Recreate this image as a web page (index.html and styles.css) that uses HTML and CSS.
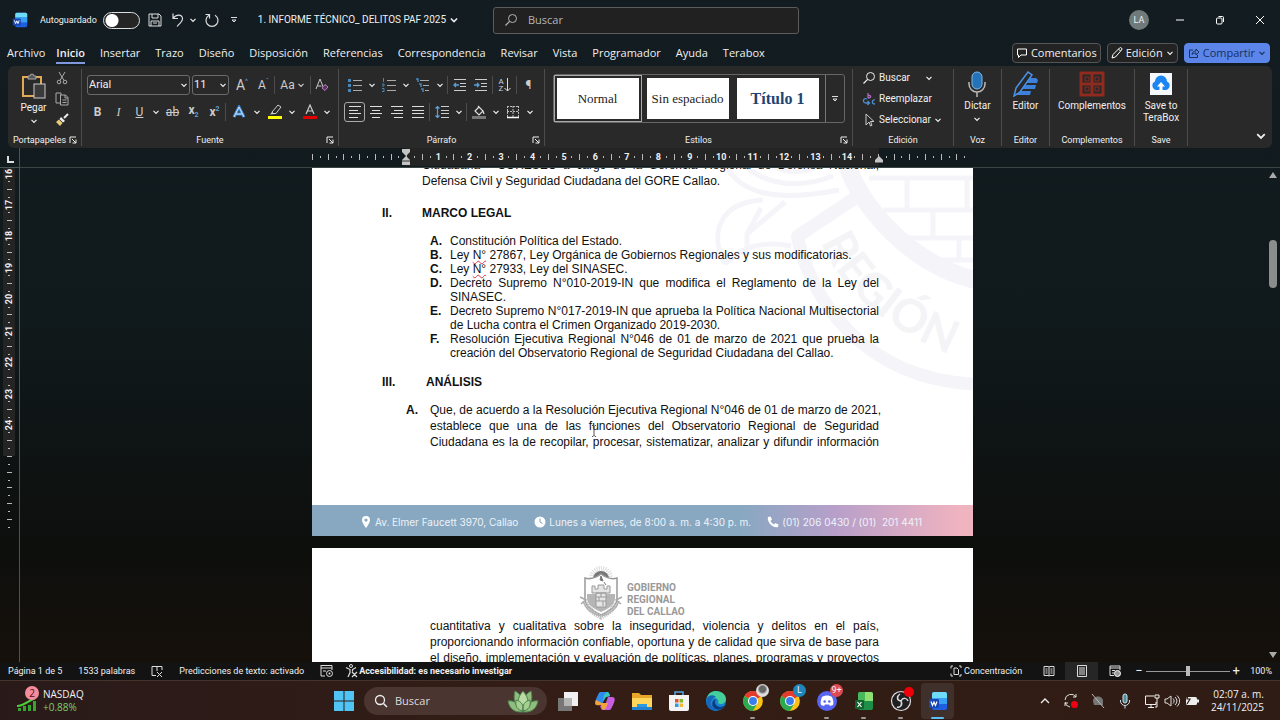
FILE: index.html
```html
<!DOCTYPE html>
<html lang="es">
<head>
    <meta charset="UTF-8">
    <meta name="viewport" content="width=device-width, initial-scale=1.0">
    <title>1. INFORME TÉCNICO_ DELITOS PAF 2025</title>
    <link rel="stylesheet" href="styles.css">
</head>
<body>

    <!-- shared icons -->
    <svg class="sprite" aria-hidden="true">
        <symbol id="chev" viewBox="0 0 8 8"><path d="M1.5 2.8 4 5.3 6.5 2.8" fill="none" stroke="currentColor" stroke-width="1.2"/></symbol>
        <symbol id="launch" viewBox="0 0 8 8"><path d="M1 7V1h6M3 3l4 4M7 3.500V7H3.500" fill="none" stroke="currentColor"/></symbol>
        <symbol id="lens" viewBox="0 0 14 14"><circle cx="8.500" cy="5.500" r="4" fill="none" stroke="currentColor"/><path d="M5.600 8.400 1.500 12.500" stroke="currentColor" stroke-width="1.200"/></symbol>
        <symbol id="word" viewBox="0 0 20 20"><rect x="4" y="1" width="15" height="18" rx="2" fill="#1f5fe0"/><path d="M6 1h11a2 2 0 0 1 2 2v4H4V3a2 2 0 0 1 2-2z" fill="#6fdcf7"/><path d="M4 7h15v6H4z" fill="#37a0f2"/><rect x="1" y="8" width="10" height="9" rx="1" fill="#1746b5"/><path d="m3 10.500 1.500 4L6 11l1.500 3.500 1.500-4" fill="none" stroke="#fff" stroke-width="1.200"/></symbol>
        <symbol id="chrome" viewBox="0 0 20 20"><circle cx="10" cy="10" r="9" fill="#fbc116"/><path d="M10 10 2.200 5.500A9 9 0 0 1 17.800 5.500z" fill="#e33b2e"/><path d="M10 10 2.200 5.500A9 9 0 0 0 10 19l3.500-6z" fill="#2da94f"/><circle cx="10" cy="10" r="4.600" fill="#fff"/><circle cx="10" cy="10" r="3.600" fill="#3b7ded"/></symbol>
    </svg>

    <header class="titlebar">
        <div class="quick">
            <svg class="i16" viewBox="0 0 20 20"><use href="#word"/></svg>
            <label class="autosave"><span>Autoguardado</span><input type="checkbox" class="switch"></label>
            <button aria-label="Guardar"><svg class="i16" viewBox="0 0 16 16"><path d="M2 2h10l2 2v10H2zM5 2v4h6V2M4 14V9h8v5M6 11h4" fill="none" stroke="#ddd"/></svg></button>
            <button class="undo" aria-label="Deshacer"><svg class="i16" viewBox="0 0 16 16"><path d="M3 1.500V6.500H8M3 6.500C6 2 12 2 12.500 6.500 12.500 10 9 12 7 14.500" fill="none" stroke="#ddd" stroke-width="1.200"/></svg><svg class="i8"><use href="#chev"/></svg></button>
            <button aria-label="Repetir"><svg class="i16" viewBox="0 0 16 16"><path d="M5 3.200a6 6 0 1 0 6 0M1.500 2.500h4v4" fill="none" stroke="#ddd" stroke-width="1.200"/></svg></button>
            <button class="more" aria-label="Personalizar"><svg class="i8" viewBox="0 0 8 8"><path d="M1 1.500h6M2 4l2 2 2-2z" fill="none" stroke="#ddd"/></svg></button>
            <button class="docname">1. INFORME TÉCNICO_ DELITOS PAF 2025 <svg class="i10"><use href="#chev"/></svg></button>
        </div>
        <label class="search">
            <svg class="i14"><use href="#lens"/></svg>
            <input type="text" placeholder="Buscar" aria-label="Buscar">
        </label>
        <div class="window-buttons">
            <span class="avatar">LA</span>
            <button aria-label="Minimizar"><svg class="i10" viewBox="0 0 10 10"><path d="M1 5h8" stroke="#fff"/></svg></button>
            <button aria-label="Restaurar"><svg class="i10" viewBox="0 0 10 10"><rect x="1.500" y="3" width="5.500" height="6" rx="1" fill="none" stroke="#fff"/><path d="M3.500 1.500h4A1 1 0 0 1 8.500 2.500V7" fill="none" stroke="#fff"/></svg></button>
            <button aria-label="Cerrar"><svg class="i10" viewBox="0 0 10 10"><path d="m1 1 8 8M9 1 1 9" stroke="#fff"/></svg></button>
        </div>
    </header>

    <nav class="menu">
        <a href="#">Archivo</a>
        <a href="#" class="active">Inicio</a>
        <a href="#">Insertar</a>
        <a href="#">Trazo</a>
        <a href="#">Diseño</a>
        <a href="#">Disposición</a>
        <a href="#">Referencias</a>
        <a href="#">Correspondencia</a>
        <a href="#">Revisar</a>
        <a href="#">Vista</a>
        <a href="#">Programador</a>
        <a href="#">Ayuda</a>
        <a href="#">Terabox</a>
        <div class="menu-right">
            <button class="pill"><svg class="i12" viewBox="0 0 12 12"><path d="M1.500 2h9v6H5L2.500 10.500V8h-1z" fill="none" stroke="#fff"/></svg>Comentarios</button>
            <button class="pill"><svg class="i12" viewBox="0 0 12 12"><path d="M1 11 2 7.500 8.500 1a1.400 1.400 0 0 1 2 2L4.500 10zM7.500 2l2 2" fill="none" stroke="#fff"/></svg>Edición<svg class="i8"><use href="#chev"/></svg></button>
            <button class="pill share"><svg class="i12" viewBox="0 0 12 12"><path d="M5 3H1.500v7.500h8V8M4 7.500C4 5 6 4 8 4V2l3 3-3 3V6C6 6 5 6.500 4 7.500z" fill="none" stroke="#16305f"/></svg>Compartir<svg class="i8"><use href="#chev"/></svg></button>
        </div>
    </nav>

    <section class="ribbon">
        <div class="group clipboard">
            <div class="tools">
                <button class="big"><svg class="i26" viewBox="0 0 26 26"><rect x="2" y="4" width="18" height="19" fill="none" stroke="#e0a955" stroke-width="2"/><path d="M7 6V3h2a2 2 0 0 1 4 0h2v3z" fill="#555" stroke="#aaa"/><rect x="13" y="11" width="11" height="14" fill="#3a3a3a" stroke="#ccc"/></svg>Pegar<svg class="i8"><use href="#chev"/></svg></button>
                <div class="stack">
                    <button aria-label="Cortar"><svg class="i14" viewBox="0 0 14 14"><path d="m4 1 5 8.500M10 1 5 9.500" stroke="#aaa"/><circle cx="4" cy="11" r="1.800" fill="none" stroke="#aaa"/><circle cx="10" cy="11" r="1.800" fill="none" stroke="#aaa"/></svg></button>
                    <button aria-label="Copiar"><svg class="i14" viewBox="0 0 14 14"><path d="M5 11H1V1h5v2M5.500 3h5L13 5.500V13H5.500zM10 3v3h3M7.500 8h4M7.500 10.500h4" fill="none" stroke="#aaa"/></svg></button>
                    <button aria-label="Copiar formato"><svg class="i14" viewBox="0 0 14 14"><path d="m13 1-4 4" stroke="#eee" stroke-width="2"/><path d="m6 4 4 4-2 1.500L4.500 6z" fill="#eee"/><path d="M4 6.500 7.500 10 5 13 1 9z" fill="#e8cb78"/></svg></button>
                </div>
            </div>
            <footer>Portapapeles<svg class="i8"><use href="#launch"/></svg></footer>
        </div>

        <div class="group font">
            <div class="tools rows">
                <div class="row">
                    <label class="drop face"><select aria-label="Fuente"><option>Arial</option></select><svg class="i8"><use href="#chev"/></svg></label>
                    <label class="drop size"><select aria-label="Tamaño"><option>11</option></select><svg class="i8"><use href="#chev"/></svg></label>
                    <button class="letter grow">A<sup>^</sup></button>
                    <button class="letter">A<sup>ˇ</sup></button>
                    <i class="sep"></i>
                    <button class="letter case">Aa<svg class="i8"><use href="#chev"/></svg></button>
                    <i class="sep"></i>
                    <button aria-label="Borrar formato"><svg class="i14" viewBox="0 0 14 14"><path d="M1 11 5 1l4 10M2.500 8h4" fill="none" stroke="#ccc"/><path d="m7 10 3-3.500 3 2.500-3 3.500z" fill="#59315f" stroke="#b77cc4"/></svg></button>
                </div>
                <div class="row">
                    <button class="letter"><b>B</b></button>
                    <button class="letter serif"><em>I</em></button>
                    <button class="letter"><u>U</u></button>
                    <button class="arrow" aria-label="Subrayado"><svg class="i8"><use href="#chev"/></svg></button>
                    <button class="letter"><s>ab</s></button>
                    <button class="letter bold">x<sub>2</sub></button>
                    <button class="letter bold">x<sup>2</sup></button>
                    <i class="sep"></i>
                    <button class="glow" aria-label="Efectos"><svg class="i14" viewBox="0 0 14 14"><path d="M2 12 7 2l5 10M4 9h6" fill="none" stroke="#3d86cf" stroke-width="3"/><path d="M2 12 7 2l5 10M4 9h6" fill="none" stroke="#d4e8fb"/></svg></button>
                    <button class="arrow" aria-label="Más efectos"><svg class="i8"><use href="#chev"/></svg></button>
                    <button class="colour" aria-label="Resaltado"><svg class="i16" viewBox="0 0 16 16"><path d="m5 8 6-7 3 2-5 6.500H6z" fill="none" stroke="#ccc"/><path d="M3 10.500 5 8l2.500 2z" fill="#ccc"/><path d="M1 12h14v3H1z" fill="#ffff00"/></svg></button>
                    <button class="arrow" aria-label="Color de resaltado"><svg class="i8"><use href="#chev"/></svg></button>
                    <button class="colour" aria-label="Color"><svg class="i16" viewBox="0 0 16 16"><path d="M4 10 8 1l4 9M5.500 7h5" fill="none" stroke="#ccc" stroke-width="1.200"/><path d="M1 12h14v3H1z" fill="#e00000"/></svg></button>
                    <button class="arrow" aria-label="Más colores"><svg class="i8"><use href="#chev"/></svg></button>
                </div>
            </div>
            <footer>Fuente<svg class="i8"><use href="#launch"/></svg></footer>
        </div>

        <div class="group paragraph">
            <div class="tools rows">
                <div class="row">
                    <button aria-label="Viñetas"><svg class="i14" viewBox="0 0 14 14"><path d="M5 2.500h9M5 7.500h9M5 12.500h9" stroke="#aaa"/><path d="M0 2.500h3M0 7.500h3M0 12.500h3" stroke="#4787ba" stroke-width="3"/></svg></button>
                    <button class="arrow" aria-label="Más viñetas"><svg class="i8"><use href="#chev"/></svg></button>
                    <button aria-label="Numeración"><svg class="i14" viewBox="0 0 14 14"><path d="M5 2.500h9M5 7.500h9M5 12.500h9" stroke="#aaa"/><path d="M1.500 0v4M0 6h2v2H0M0 10.500h2v3H0" fill="none" stroke="#4787ba"/></svg></button>
                    <button class="arrow" aria-label="Más numeración"><svg class="i8"><use href="#chev"/></svg></button>
                    <button aria-label="Multinivel"><svg class="i14" viewBox="0 0 14 14"><path d="M4 2.500h9M7 7.500h6M9 12.500h4" stroke="#aaa"/><path d="M0 1h2v3M3 6h2v3M5 11h2v3" fill="none" stroke="#4787ba" stroke-width="1.500"/></svg></button>
                    <button class="arrow" aria-label="Más niveles"><svg class="i8"><use href="#chev"/></svg></button>
                    <i class="sep"></i>
                    <button aria-label="Disminuir sangría"><svg class="i14" viewBox="0 0 14 14"><path d="M1 1.500h12M7 5.500h6M7 8.500h6M1 12.500h12" stroke="#ccc"/><path d="M6 7H1m2-2L1 7l2 2" fill="none" stroke="#5ba0d8" stroke-width="1.300"/></svg></button>
                    <button aria-label="Aumentar sangría"><svg class="i14" viewBox="0 0 14 14"><path d="M1 1.500h12M7 5.500h6M7 8.500h6M1 12.500h12" stroke="#ccc"/><path d="M0 7h5M3 5l2 2-2 2" fill="none" stroke="#5ba0d8" stroke-width="1.300"/></svg></button>
                    <i class="sep"></i>
                    <button class="sort" aria-label="Ordenar"><span>A<br>Z</span><svg class="i14" viewBox="0 0 7 14"><path d="M3.500 0v13M.5 10l3 3 3-3" fill="none" stroke="#ddd"/></svg></button>
                    <i class="sep"></i>
                    <button class="letter">¶</button>
                </div>
                <div class="row">
                    <button class="on" aria-label="Izquierda"><svg class="i14" viewBox="0 0 14 14"><path d="M1 1.500h12M1 5.500h9M1 8.500h12M1 12.500h9" stroke="#ddd"/></svg></button>
                    <button aria-label="Centrar"><svg class="i14" viewBox="0 0 14 14"><path d="M1 1.500h12M3 5.500h8M1 8.500h12M3 12.500h8" stroke="#ddd"/></svg></button>
                    <button aria-label="Derecha"><svg class="i14" viewBox="0 0 14 14"><path d="M1 1.500h12M4 5.500h9M1 8.500h12M4 12.500h9" stroke="#ddd"/></svg></button>
                    <button aria-label="Justificar"><svg class="i14" viewBox="0 0 14 14"><path d="M1 1.500h12M1 5.500h12M1 8.500h12M1 12.500h12" stroke="#ddd"/></svg></button>
                    <i class="sep"></i>
                    <button aria-label="Interlineado"><svg class="i14" viewBox="0 0 14 14"><path d="M6 1.500h8M6 5.500h8M6 8.500h8M6 12.500h8" stroke="#ccc"/><path d="M2.500 1v12M.5 3.500l2-2 2 2M.5 10.500l2 2 2-2" fill="none" stroke="#5ba0d8" stroke-width="1.200"/></svg></button>
                    <button class="arrow" aria-label="Más interlineado"><svg class="i8"><use href="#chev"/></svg></button>
                    <i class="sep"></i>
                    <button class="fill" aria-label="Sombreado"><svg class="i14" viewBox="0 0 14 14"><path d="m6 1 5 5-4 4-4-4 4-4M11 6l1 3" fill="none" stroke="#ddd" stroke-width="1.200"/><path d="M0 11h14v3H0z" fill="#777"/></svg></button>
                    <button class="arrow" aria-label="Más sombreado"><svg class="i8"><use href="#chev"/></svg></button>
                    <button class="fill" aria-label="Bordes"><svg class="i14" viewBox="0 0 14 14"><path d="M1.500 1v11M12.500 1v11M7 1v11M1 1.500h12M1 6.500h12" stroke="#bbb" stroke-dasharray="2 1"/><path d="M1 12.500h12" stroke="#fff" stroke-width="1.500"/></svg></button>
                    <button class="arrow" aria-label="Más bordes"><svg class="i8"><use href="#chev"/></svg></button>
                </div>
            </div>
            <footer>Párrafo<svg class="i8"><use href="#launch"/></svg></footer>
        </div>

        <div class="group styles">
            <div class="tools">
                <div class="gallery">
                    <button class="style picked">Normal</button>
                    <button class="style">Sin espaciado</button>
                    <button class="style title">Título 1</button>
                    <button class="gallery-more" aria-label="Más estilos"><svg class="i8" viewBox="0 0 8 8"><path d="M1 1.500h6M2 4l2 2 2-2z" fill="none" stroke="#ddd"/></svg></button>
                </div>
            </div>
            <footer>Estilos<svg class="i8"><use href="#launch"/></svg></footer>
        </div>

        <div class="group editing">
            <div class="tools stack">
                <button><svg class="i14"><use href="#lens"/></svg>Buscar<svg class="i8 far"><use href="#chev"/></svg></button>
                <button><svg class="i14" viewBox="0 0 14 14"><path d="M6 1v5M6 4c3-2 4 2 0 2" fill="none" stroke="#b36ac0" stroke-width="1.300"/><path d="M5 7c-4-2-5 4-1 4H7M5.500 9 7.500 11l-2 2" fill="none" stroke="#4a90d0" stroke-width="1.300"/><path d="M13 8c-3-1-4 4 0 4" fill="none" stroke="#4a90d0" stroke-width="1.300"/></svg>Reemplazar</button>
                <button><svg class="i14" viewBox="0 0 14 14"><path d="M4 1v11l3-3 1.500 4 1.500-.7L8.500 8.500H12z" fill="none" stroke="#ccc"/></svg>Seleccionar<svg class="i8"><use href="#chev"/></svg></button>
            </div>
            <footer>Edición</footer>
        </div>

        <div class="group">
            <div class="tools"><button class="big"><svg class="i26" viewBox="0 0 26 26"><rect x="8" y="1" width="10" height="17" rx="5" fill="#2672b8" stroke="#7fb9e8"/><path d="M5 11v2a8 8 0 0 0 16 0v-2M13 21v5" fill="none" stroke="#bbb" stroke-width="1.500"/></svg>Dictar<svg class="i8"><use href="#chev"/></svg></button></div>
            <footer>Voz</footer>
        </div>
        <div class="group">
            <div class="tools"><button class="big"><svg class="i26" viewBox="0 0 26 26"><path d="M14 7h9l2 2-1 3H11zM9 14h14l-1 4H7zM6 20h12l-1 4H3z" fill="#3c82dc"/><path d="M1 25 3 17 15 1l4 3L7 21z" fill="#292929" stroke="#4a93e6" stroke-width="1.500"/></svg>Editor</button></div>
            <footer>Editor</footer>
        </div>
        <div class="group">
            <div class="tools"><button class="big"><svg class="i26" viewBox="0 0 26 26"><path d="M2 2h22v22H2zM13 2v22M2 13h22" fill="none" stroke="#8e2a1e" stroke-width="3"/><path d="M6 6h4v4H6zM16 6h4v4h-4zM6 16h4v4H6zM16 16h4v4h-4z" fill="none" stroke="#8e2a1e"/></svg>Complementos</button></div>
            <footer>Complementos</footer>
        </div>
        <div class="group">
            <div class="tools"><button class="big"><svg class="i26" viewBox="0 0 26 26"><path d="M2 2h22v22H2z" fill="#f4f8fd"/><path d="M8 19a4.500 4.500 0 0 1-1-8.500 6 6 0 0 1 12 0A4.500 4.500 0 0 1 18 19z" fill="#1b86f2"/><path d="m13 11 4 4.500h-2.500V20h-3v-4.500H9z" fill="#fff"/></svg>Save to<br>TeraBox</button></div>
            <footer>Save</footer>
        </div>
        <button class="collapse" aria-label="Contraer"><svg class="i12"><use href="#chev"/></svg></button>
    </section>

    <main class="workspace">
        <div class="corner"></div>
        <div class="ruler-row">
            <div class="hruler" id="hruler">
                <svg class="indent" viewBox="0 0 10 18"><path d="M1 1h8v3L5 8 1 4zM5 8l4 4v5H1v-5z" fill="#c4c4c4"/><path d="M1 13h8" stroke="#333"/></svg>
                <svg class="indent right" viewBox="0 0 10 18"><path d="M1 14.500V12l4-4 4 4v2.500z" fill="#c4c4c4"/></svg>
            </div>
        </div>
        <div class="vruler-col"><div class="vruler" id="vruler"></div></div>
        <div class="document">
            <article class="page first">
                <svg class="watermark" viewBox="0 0 260 226" aria-hidden="true">
                    <g fill="none" stroke="#f5f4f9">
                        <path d="M84 66C96 130 150 210 260 216" stroke-width="13"/>
                        <path d="M82 70 154 22" stroke-width="13"/>
                        <path d="M134-4C146 36 196 96 262 112" stroke-width="18"/>
                        <path d="M14 0c16 26 50 34 112 22M30-4c20 20 54 26 90 12M56-4c16 10 34 10 54 0M50 32C6 34-4 66 12 96M72 34 34 66v22M12 96c16-16 34-24 66-18M48 40l-14 26" stroke-width="5"/>
                        <path d="M156 10h104M170 42h90M196 70h64M226 92h34M194 10v32M254 10v32M220 42v28M246 70v24" stroke-width="5"/>
                    </g>
                    <path id="arc" d="M108 74C126 118 172 168 270 198" fill="none"/>
                    <text class="seal-text"><textPath href="#arc">REGIÓN</textPath></text>
                </svg>
                <p class="intro">Ciudadana - CORESEC a cargo de la Gerencia Regional de Defensa Nacional, Defensa Civil y Seguridad Ciudadana del GORE Callao.</p>
                <h2><span>II.</span>MARCO LEGAL</h2>
                <ol class="laws">
                    <li>Constitución Política del Estado.</li>
                    <li>Ley <span class="typo">N°</span> 27867, Ley Orgánica de Gobiernos Regionales y sus modificatorias.</li>
                    <li>Ley <span class="typo">N°</span> 27933, Ley del SINASEC.</li>
                    <li>Decreto Supremo N°010-2019-IN que modifica el Reglamento de la Ley del SINASEC.</li>
                    <li>Decreto Supremo N°017-2019-IN que aprueba la Política Nacional Multisectorial de Lucha contra el Crimen Organizado 2019-2030.</li>
                    <li>Resolución Ejecutiva Regional N°046 de 01 de marzo de 2021 que prueba la creación del Observatorio Regional de Seguridad Ciudadana del Callao.</li>
                </ol>
                <h2 class="analysis"><span>III.</span>ANÁLISIS</h2>
                <ol class="points">
                    <li><span class="line">Que, de acuerdo a la Resolución Ejecutiva Regional N°046 de 01 de marzo de 2021,</span> establece que una de las funciones del Observatorio Regional de Seguridad Ciudadana es la de recopilar, procesar, sistematizar, analizar y difundir información</li>
                </ol>
                <footer class="contact">
                    <svg class="i12" viewBox="0 0 12 12"><path d="M6 0a4 4 0 0 1 4 4c0 3-4 8-4 8S2 7 2 4a4 4 0 0 1 4-4zm0 2.500a1.600 1.600 0 1 0 0 3.200 1.600 1.600 0 0 0 0-3.200z" fill="#fff"/></svg>
                    <span>Av. Elmer Faucett 3970, Callao</span>
                    <svg class="i12" viewBox="0 0 12 12"><circle cx="6" cy="6" r="5.500" fill="#fff"/><path d="M6 2.500V6l2.500 1.500" fill="none" stroke="#7f9fba"/></svg>
                    <span>Lunes a viernes, de 8:00 a. m. a 4:30 p. m.</span>
                    <svg class="i12" viewBox="0 0 12 12"><path d="M1 1 3.500.5 5 3.500 3.500 5C4.200 6.500 5.500 7.800 7 8.500L8.500 7l3 1.500L11 11C6 12.500-.5 6 1 1z" fill="#fff"/></svg>
                    <span>(01) 206 0430 / (01)&nbsp; 201 4411</span>
                </footer>
            </article>
            <article class="page second">
                <div class="brand">
                    <svg class="crest" viewBox="0 0 44 56" aria-hidden="true">
                        <circle cx="22" cy="13" r="9" fill="none" stroke="#ddd" stroke-width="6" stroke-dasharray="1 1"/>
                        <path d="M14 14a8 8 0 0 1 16 0z" fill="#777"/>
                        <path d="M6 13c6 2 12-1 16-4 4 3 10 6 16 4v20c0 9-8 13-16 17C14 46 6 42 6 33z" fill="#fff" stroke="#999" stroke-width="1.500"/>
                        <path d="M8 29h28v4c0 7-7 11-14 14-7-3-14-7-14-14z" fill="#b5b5b5"/>
                        <path d="M13 21h3v3h3v-4h6v4h3v-3h3v7H13zM17 28h10v14H17z" fill="#e5e5e5" stroke="#999"/>
                        <path d="M17 32h10M17 36h10M22 28v4M20 32v4M24 36v5" stroke="#999"/>
                        <path d="m22 11 2 5-3-1zM25 17l2 3" stroke="#777" fill="#777"/>
                        <path d="M1 32l6 3-5 4M43 32l-6 3 5 4M4 36c3 9 9 13 18 15 9-2 15-6 18-15" fill="none" stroke="#aaa" stroke-width="1.500"/>
                        <path d="M7 38c4 8 9 11 15 14 6-3 11-6 15-14" fill="none" stroke="#bbb" stroke-width="5" stroke-dasharray="1 1"/>
                    </svg>
                    <div>GOBIERNO<br>REGIONAL<br>DEL CALLAO</div>
                </div>
                <p>cuantitativa y cualitativa sobre la inseguridad, violencia y delitos en el país, proporcionando información confiable, oportuna y de calidad que sirva de base para el diseño, implementación y evaluación de políticas, planes, programas y proyectos</p>
            </article>
            <svg class="cursor" viewBox="0 0 6 12"><path d="M1 .5h1l1 1 1-1h1M3 1v10M1 11.500h1l1-1 1 1h1" fill="none" stroke="#555"/></svg>
        </div>
        <div class="scroll"><span class="up"></span><span class="thumb"></span><span class="down"></span></div>
    </main>

    <footer class="status">
        <span>Página 1 de 5</span>
        <span>1533 palabras</span>
        <svg class="i12" viewBox="0 0 12 12"><path d="M6 1.500H1v9h4M6 1v5M6 1.500h5V5M6 7l5 5M11 7l-5 5" fill="none" stroke="#ddd"/></svg>
        <span>Predicciones de texto: activado</span>
        <svg class="i14" viewBox="0 0 14 14"><path d="M1 1.500h11V6M1 1v11h4M1 4h11M3 7h3" fill="none" stroke="#ddd"/><circle cx="9.500" cy="9.500" r="3" fill="none" stroke="#ddd"/><circle cx="9.500" cy="9.500" r="1"  fill="#ddd"/></svg>
        <strong><svg class="i14" viewBox="0 0 14 14"><circle cx="6" cy="2" r="1.500" fill="none" stroke="#ddd"/><path d="M1 3.500 5 5.500v3L3 13M11 3.500 7.500 5.500v2M7 8l5 5M12 8l-5 5" fill="none" stroke="#ddd" stroke-width="1.200"/></svg>Accesibilidad: es necesario investigar</strong>
        <div class="status-right">
            <span class="focus"><svg class="i12" viewBox="0 0 12 12"><path d="M1 3.500V1h2M9 1h2v2M11 9v2H9M3 11H1V8.500M4 3h3l1.500 1.500V9.500H4z" fill="none" stroke="#ddd"/></svg>Concentración</span>
            <button aria-label="Lectura"><svg class="i12" viewBox="0 0 12 12"><path d="M6 2v9M1 1.500h4l1 .5 1-.5h4v9H7L6 11l-1-.5H1zM2.500 4h2M2.500 6h2M2.500 8h2M7.500 4h2M7.500 6h2M7.500 8h2" fill="none" stroke="#ddd"/></svg></button>
            <button class="on" aria-label="Impresión"><svg class="i12" viewBox="0 0 12 12"><path d="M1.500.5h9v11h-9zM3 3h6M3 5h6M3 7h6M3 9h6" fill="none" stroke="#ddd"/></svg></button>
            <button aria-label="Web"><svg class="i12" viewBox="0 0 12 12"><path d="M5 10.500H1V1h10v4M1 3h10M3 5.500h3M3 8h2" fill="none" stroke="#ddd"/><circle cx="8.500" cy="8.500" r="3" fill="#999" stroke="#fff"/></svg></button>
            <span class="zoom"><span>−</span><input type="range" min="0" max="100" value="50" aria-label="Zoom"><span>+</span></span>
            <span class="percent">100%</span>
        </div>
    </footer>

    <footer class="taskbar">
        <div class="side stocks">
            <div class="stock-icon">
                <svg viewBox="0 0 20 24"><path d="M1 22V19h3v3zM6 22v-5h3v5zM11 22v-6h3v6zM16 22V12h3v10z" fill="#35a52b"/><path d="M0 17c6 0 10-4 18-8" fill="none" stroke="#4fd03a" stroke-width="2"/></svg>
                <b>2</b>
            </div>
            <div>NASDAQ<br><span class="gain">+0.88%</span></div>
        </div>
        <div class="apps">
            <button aria-label="Inicio"><svg class="i22" viewBox="0 0 22 22"><path d="M1 1h9.500v9.500H1zM11.500 1H21v9.500h-9.500zM1 11.500h9.500V21H1zM11.500 11.500H21V21h-9.500z" fill="#4fc4f5"/></svg></button>
            <label class="task-search">
                <svg class="i14" viewBox="0 0 14 14"><circle cx="6" cy="6" r="4.500" fill="none" stroke="#eee" stroke-width="1.300"/><path d="m9.500 9.500 3.500 3.500" stroke="#eee" stroke-width="1.500"/></svg>
                <input type="text" placeholder="Buscar" aria-label="Buscar en Windows">
                <svg class="plant" viewBox="0 0 32 24"><g fill="#8fbd7e" stroke="#4d7f4c"><path d="M16 23C6 24 2 18 1 12c6-1 10 2 15 11zM16 23c10 1 14-5 15-11-6-1-10 2-15 11z"/><path d="M16 22C7 18 6 9 8 2c6 3 9 9 8 20zM16 22c9-4 10-13 8-20-6 3-9 9-8 20z"/><path fill="#b9dba4" d="M16 21c-6-4-7-11 0-19 7 8 6 15 0 19z"/><path fill="#a4cf90" d="M16 22c-6-1-8-5-7-11 5 1 8 5 7 11zM16 22c6-1 8-5 7-11-5 1-8 5-7 11z"/></g></svg>
            </label>
            <button aria-label="Vista de tareas"><svg class="i22" viewBox="0 0 22 22"><rect x="1" y="8" width="14" height="13" fill="#777"/><rect x="7" y="2" width="14" height="14" fill="#f0f0f0"/><path d="M7 8h8v8H7z" fill="#b5b5b5"/></svg></button>
            <button aria-label="Copilot"><svg class="i22" viewBox="0 0 22 22"><path d="M7 2h6c2 0 2 2 3 4l-3 1c-3 0-3 3-5 8H4c-4 0-3-4-1-8s2-5 4-5z" fill="#2f8bf0"/><path d="M15 20H9c-2 0-2-2-3-4l3-1c3 0 3-3 5-8h4c4 0 3 4 1 8s-2 5-4 5z" fill="#c85ee0"/><path d="M2 10c-2 5 0 6 5 5l1 4c1 1 3 1 4-1l2-5H8z" fill="#f0a33c"/><path d="M13 2c2 0 2 1 3 4l-4 1-3 5 1-7z" fill="#36c6c0"/></svg></button>
            <button aria-label="Explorador"><svg class="i22" viewBox="0 0 22 22"><path d="M1 3h7l2 2h11v15H1z" fill="#e9a72a"/><path d="M1 8h20v12H1z" fill="#ffd65c"/><path d="M1 17h20v3H1z" fill="#2382cf"/><path d="M6 14h10v3H6z" fill="#2c9ae0"/></svg></button>
            <button aria-label="Store"><svg class="i22" viewBox="0 0 22 22"><path d="M7 5V2h8v3" fill="none" stroke="#55a7e4" stroke-width="1.500"/><path d="M1 5h20v14a2 2 0 0 1-2 2H3a2 2 0 0 1-2-2z" fill="#f4f4f4"/><path d="M7 9h3.500v3.500H7z" fill="#e5522b"/><path d="M11.500 9H15v3.500h-3.500z" fill="#7fba2c"/><path d="M7 13.500h3.500V17H7z" fill="#2a9fe4"/><path d="M11.500 13.500H15V17h-3.500z" fill="#f5b92e"/></svg></button>
            <button aria-label="Edge"><svg class="i22" viewBox="0 0 22 22"><circle cx="11" cy="11" r="10" fill="#1883d0"/><path d="M1.500 9C3 3 7 1 11 1c6 0 10 4 10 8 0 5-6 6-8 4 1-2 0-5-4-5-3 0-6 1-7.500 4z" fill="#43ce9a"/><path d="M1.500 9C3 5 8 4 11 7c-4 1-6 4-5 8 1 3 4 5 7 5.500C5 22 0 16 1.500 9z" fill="#1567bd"/><path d="M11 9c-2 3-1 7 4 8 2 0 4-1 5-2-2 5-8 6-11 3-3-3-2-8 2-9z" fill="#0b3d83"/></svg></button>
            <button class="running" aria-label="Chrome"><svg class="i22"><use href="#chrome"/></svg><b class="badge photo"></b></button>
            <button class="running" aria-label="Chrome L"><svg class="i22"><use href="#chrome"/></svg><b class="badge blue">L</b></button>
            <button class="running" aria-label="Discord"><svg class="i22" viewBox="0 0 22 22"><circle cx="11" cy="11" r="10" fill="#5865f2"/><path d="M6 7c3-2 7-2 10 0 1 3 2 5 1 8l-3 1-1-1.500H9L8 16l-3-1c-1-3 0-5 1-8z" fill="#fff"/><circle cx="8.700" cy="11.500" r="1.300" fill="#5865f2"/><circle cx="13.300" cy="11.500" r="1.300" fill="#5865f2"/></svg><b class="badge red">9+</b></button>
            <button class="running" aria-label="Excel"><svg class="i20" viewBox="0 0 20 20"><rect x="4" y="1" width="15" height="18" rx="2" fill="#1e8f49"/><path d="M11 1h6a2 2 0 0 1 2 2v7h-8z" fill="#8fe070"/><path d="M6 1h5v9H4V3a2 2 0 0 1 2-2z" fill="#46b85a"/><rect x="1" y="9" width="9" height="9" rx="1" fill="#10632f"/><path d="m3.500 11 4 5M7.500 11l-4 5" stroke="#fff" stroke-width="1.200"/></svg></button>
            <button class="running" aria-label="OBS"><svg class="i22" viewBox="0 0 22 22"><circle cx="11" cy="11" r="9.500" fill="#1f1f22" stroke="#ddd" stroke-width="1.200"/><path d="M11 11c-5-1-4-5-1-7M11 11c2-4 6-3 7 0M11 11c2 4-1 7-4 6" fill="none" stroke="#ddd" stroke-width="1.500"/></svg><b class="badge dot"></b></button>
            <button class="running current" aria-label="Word"><svg class="i20"><use href="#word"/></svg></button>
        </div>
        <div class="side tray">
            <svg class="i14" viewBox="0 0 14 14"><path d="m3 9 4-4 4 4" fill="none" stroke="#eee" stroke-width="1.300"/></svg>
            <svg class="i16" viewBox="0 0 16 16"><path d="M2 7a6 6 0 0 1 11-3M13 1v3h-3M2 9a6 6 0 0 0 5 5M2 13v-3h3" fill="none" stroke="#ddd"/><circle cx="11.500" cy="11.500" r="3.500" fill="#f00010"/></svg>
            <svg class="i16" viewBox="0 0 16 16"><path d="M3 8c0-6 10-6 10 0v4H4" fill="#777"/><path d="m2 1 12 14" stroke="#bbb"/></svg>
            <svg class="i16" viewBox="0 0 16 16"><rect x="6" y="1" width="4" height="9" rx="2" fill="#4a8f9b" stroke="#cde"/><path d="M3.500 7v1a4.500 4.500 0 0 0 9 0V7M8 13v2.500" fill="none" stroke="#cde"/></svg>
            <div class="net">
                <svg class="i16" viewBox="0 0 16 16"><path d="M10 3H1.500v8.500H12V9M4 14.500h6M7 11.500v3M11 2h4v3h-4zM13 5v9h-2" fill="none" stroke="#eee"/></svg>
                <svg class="i16" viewBox="0 0 16 16"><path d="M1 6h2l4-3v10l-4-3H1zM9 5.500c1.500 1.500 1.500 3.500 0 5M11 4c2.500 2.500 2.500 5.500 0 8M13 2.500c3.500 3.500 3.500 7.500 0 11" fill="none" stroke="#ddd"/></svg>
                <svg class="i16" viewBox="0 0 16 16"><rect x="2" y="4" width="11" height="8" rx="1.500" fill="#eee"/><path d="M14 6.500v3" stroke="#eee" stroke-width="2"/><path d="m4 2-1 4h3L3 11" fill="none" stroke="#2c1a14" stroke-width="1.200"/></svg>
            </div>
            <div class="clock">02:07 a. m.<br>24/11/2025</div>
        </div>
    </footer>

    <script src="script.js"></script>
</body>
</html>
```

FILE: styles.css
```css
* {
    box-sizing: border-box;
}
body {
    margin: 0;
    height: 100vh;
    display: flex;
    flex-direction: column;
    overflow: hidden;
    font: 11px/14px "Open Sans", sans-serif;
    color: #f0f0f0;
    background: linear-gradient(#131c21, #10191b 45%, #0d0f0d 76%, #16100b 92%);
}
button {
    display: flex;
    align-items: center;
    justify-content: center;
    padding: 0;
    border: 0;
    background: none;
    color: inherit;
    font: inherit;
}
input, select {
    font: inherit;
    color: inherit;
    border: 0;
    padding: 0;
    background: none;
    outline: 0;
}
a {
    color: inherit;
    text-decoration: none;
}
svg {
    flex: none;
    display: block;
}
.sprite { position: absolute; width: 0; height: 0; }
.i8 { width: 8px; height: 8px; }
.i10 { width: 10px; height: 10px; }
.i12 { width: 12px; height: 12px; }
.i14 { width: 14px; height: 14px; }
.i16 { width: 16px; height: 16px; }
.i20 { width: 20px; height: 20px; }
.i22 { width: 22px; height: 22px; }
.i26 { width: 26px; height: 26px; }

/* title bar */
.titlebar {
    flex: none;
    height: 40px;
    padding-left: 12px;
    display: grid;
    grid-template-columns: minmax(0, 1fr) 306px minmax(0, 1fr);
    align-items: center;
}
.quick {
    display: flex;
    align-items: center;
    gap: 7px;
}
.autosave {
    display: flex;
    align-items: center;
    gap: 6px;
    padding-left: 5px;
    font: 9px/14px Roboto, sans-serif;
}
.switch {
    appearance: none;
    margin: 0;
    width: 37px;
    height: 17px;
    border: 1px solid #ddd;
    border-radius: 9px;
    background: radial-gradient(circle at 8px 50%, #fff 6px, #252525 7px);
}
.undo { gap: 3px; }
.more { margin: 0 13px 0 3px; }
.docname { gap: 3px; font: 10px/14px Roboto, sans-serif; white-space: nowrap; }
.search {
    display: flex;
    align-items: center;
    gap: 10px;
    height: 27px;
    padding: 0 10px;
    border: 1px solid #5c5c5c;
    border-radius: 3px;
    background: #212121;
    color: #b5b5b5;
}
.search input { flex: 1; min-width: 0; }
::placeholder { color: #b5b5b5; opacity: 1; }
.window-buttons {
    display: flex;
    justify-content: flex-end;
    align-items: center;
}
.window-buttons button { width: 40px; height: 32px; }
.avatar {
    width: 20px;
    height: 20px;
    margin-right: 11px;
    border-radius: 50%;
    background: #6f7a7a;
    font: 9px/20px Roboto, sans-serif;
    text-align: center;
}

/* menu */
.menu {
    flex: none;
    height: 26px;
    display: flex;
    align-items: center;
    gap: 15px;
    padding: 0 10px 0 7px;
}
.menu a { line-height: 22px; }
.menu .active {
    font-weight: 600;
    margin-left: -4px;
    box-shadow: 0 -2px 0 #8298dc inset;
}
.menu-right {
    margin-left: auto;
    display: flex;
    gap: 6px;
}
.pill {
    height: 20px;
    padding: 0 3px;
    gap: 3px;
    border: 1px solid #555;
    border-radius: 4px;
    background: #232323;
}
.share {
    background: #5b85e8;
    border-color: #5b85e8;
    color: #16305f;
}

/* ribbon */
.ribbon {
    flex: none;
    height: 82px;
    margin: 0 8px;
    display: grid;
    grid-template-columns: 74px 257px 206px 308px 101px 48px 48px 85px 53px 1fr;
    border-radius: 6px;
    background: #292929;
    font: 10px/12px Roboto, sans-serif;
}
.group {
    margin: 3px 0 2px;
    padding-top: 2px;
    border-right: 1px solid #4c4c4c;
    display: flex;
    flex-direction: column;
    justify-content: space-between;
}
.group footer {
    position: relative;
    text-align: center;
    font-size: 9px;
    line-height: 12px;
}
.group footer .i8 { position: absolute; right: 4px; bottom: 2px; }
.clipboard footer { padding-right: 10px; }
.tools { display: flex; justify-content: center; }
.clipboard .tools { gap: 8px; }
.big { flex-direction: column; gap: 3px; }
.stack { display: flex; flex-direction: column; gap: 7px; }
.rows { flex-direction: column; gap: 7px; padding: 4px 0 0 5px; }
.row { display: flex; height: 20px; align-items: center; }
.row button { width: 21px; height: 20px; }
.row .arrow { width: 12px; }
.sep { width: 1px; height: 18px; background: #4c4c4c; }
.drop {
    position: relative;
    height: 20px;
    margin-right: 2px;
    border: 1px solid #6a6a6a;
    border-radius: 3px;
}
.drop select { appearance: none; width: 100%; height: 18px; padding-left: 1px; font-size: 11px; }
.drop .i8 { position: absolute; right: 1px; top: 5px; }
.face { width: 103px; }
.size { width: 37px; }
.row .letter { display: block; font-size: 12px; color: #ccc; }
.row .grow { font-size: 14px; width: 22px; }
.letter sup, .letter sub { font-size: 7px; line-height: 7px; color: #5ba0d8; }
.row .case { display: flex; width: 35px; gap: 2px; }
.letter.serif { font-family: "Liberation Serif", serif; }
.letter.bold { font-weight: 700; }
.row .colour { width: 23px; }
.row .glow { width: 25px; }
.row .on { border: 1px solid #aaa; border-radius: 3px; }
.paragraph .row .arrow { width: 13px; }
.paragraph .sep { margin: 0 1px; }
.sort { font: 8px/7px Roboto, sans-serif; color: #bcd6f0; }
.sort .i14 { width: 7px; }
.gallery {
    margin-top: 3px;
    display: flex;
    gap: 4px;
    padding: 1px 0 1px 1px;
    border: 1px solid #666;
    border-radius: 3px;
}
.style {
    width: 86px;
    height: 45px;
    border: 2px solid #292929;
    background: #fff;
    color: #222;
    font: 13px/16px "Liberation Serif", serif;
}
.picked { outline: 1px solid #aaa; }
.style.title { color: #1f4373; font-weight: 700; font-size: 16px; }
.gallery-more { width: 19px; margin: -1px 0; border-left: 1px solid #777; }
.editing .tools { align-items: flex-start; padding: 0 0 0 9px; }
.editing button { gap: 3px; line-height: 14px; }
.far { margin-left: 12px; }
.collapse { align-self: end; justify-self: end; padding: 6px 5px; }

/* document area */
.workspace {
    flex: 1;
    min-height: 0;
    display: grid;
    grid-template-columns: 20px minmax(0, 1fr) 15px;
    grid-template-rows: 20px minmax(0, 1fr);
}
.corner {
    border: 1px solid #4b5452;
    border-width: 0 1px 1px 0;
}
.corner::before {
    content: "";
    display: block;
    width: 5px;
    height: 5px;
    margin: 8px 7px;
    border: solid #ddd;
    border-width: 0 0 2px 2px;
}
.ruler-row {
    grid-column: 2 / 4;
    padding-right: 15px;
    border-bottom: 1px solid #3a4644;
}
.hruler {
    position: relative;
    width: 661px;
    height: 18px;
    margin: 0 auto;
    padding-right: 7px;
    display: flex;
    justify-content: space-between;
    align-items: center;
    background: linear-gradient(90deg, transparent 94px, #242424 94px, #242424 567px, transparent 567px);
    font: bold 9px/12px Roboto, sans-serif;
}
.mark {
    width: 1px;
    height: 2px;
    background: #bbb;
}
.mark.half { height: 6px; }
.mark.number {
    height: auto;
    background: none;
    display: flex;
    justify-content: center;
}
.indent { position: absolute; left: 89px; top: 0; width: 10px; height: 18px; }
.indent.right { left: 562px; }
.vruler-col {
    border-right: 1px solid #4b5452;
    padding: 5px 4px 0 3px;
    background: linear-gradient(#242424, #242424) 3px 0 / 12px 288px no-repeat;
}
.vruler {
    height: 355px;
    display: flex;
    flex-direction: column;
    justify-content: space-between;
    align-items: center;
    font: bold 9px/12px Roboto, sans-serif;
}
.vruler .mark { width: 2px; height: 1px; }
.vruler .mark.half { width: 5px; }
.vruler .mark.number { width: 12px; align-items: center; }
.vruler .mark span { transform: rotate(-90deg); }
.document {
    position: relative;
    overflow: hidden;
    font: 12px/14px "Liberation Sans", Arial, sans-serif;
    color: #111;
}
.page {
    position: relative;
    width: 661px;
    margin: 0 auto 12px;
    background: #fff;
    overflow: hidden;
    text-align: justify;
}
.page p, .page ol, .page h2 { position: relative; margin: 0 94px 0 118px; }
.page .intro { margin: -11px 94px 0 110px; line-height: 16px; }
.page h2 {
    display: flex;
    margin: 17px 94px 0 70px;
    font-size: 12px;
    line-height: 14px;
}
.page h2 span { width: 40px; }
.page .analysis { margin-top: 15px; }
.page .analysis span { width: 44px; }
.page .laws, .page .points { padding: 0; list-style: none; counter-reset: n; }
.page .laws { margin: 14px 94px 0 138px; }
.page .points { margin-top: 13px; line-height: 16px; text-align-last: justify; }
li { counter-increment: n; position: relative; }
li::before {
    content: counter(n, upper-alpha) ".";
    position: absolute;
    left: -20px;
    font-weight: 700;
    text-align-last: left;
}
.points li::before { left: -24px; }
.line { display: block; white-space: nowrap; }
.typo { text-decoration: underline wavy #d8364b 1px; }
.watermark { position: absolute; right: 0; top: 0; width: 260px; height: 226px; }
.seal-text { font: bold 46px Lato, sans-serif; fill: #f4f4f7; }
.contact {
    display: flex;
    align-items: center;
    height: 31px;
    margin-top: 55px;
    padding: 2px 0 0 48px;
    gap: 3px;
    color: #edf3f8;
    font: 10px/14px Inter, sans-serif;
    white-space: nowrap;
    background: linear-gradient(90deg, #88a8c1 65%, #b79fca 79%, #f0b3c0 98%);
}
.contact span { margin-right: 13px; }
.brand {
    display: flex;
    align-items: flex-end;
    height: 70px;
    padding: 0 0 0 267px;
    gap: 4px;
    color: #999;
    text-align: left;
    font: bold 10px/12px Roboto, sans-serif;
}
.crest { width: 44px; height: 56px; margin-bottom: -3px; }
.page.second p { line-height: 16px; text-align-last: justify; }
.cursor { position: absolute; left: 571px; top: 257px; width: 6px; height: 12px; }
.scroll {
    display: flex;
    flex-direction: column;
    align-items: center;
    padding: 4px 0;
}
.thumb { width: 8px; height: 48px; margin-top: 62px; border-radius: 4px; background: #8a8d8c; }
.up, .down { border: 4px solid transparent; }
.up { border-bottom: 6px solid #aaa; border-top: 0; }
.down { border-top: 6px solid #aaa; border-bottom: 0; margin-top: auto; }

/* status bar */
.status {
    flex: none;
    height: 18px;
    display: flex;
    align-items: center;
    gap: 16px;
    padding: 0 8px;
    background: #131313;
    font: 9px/14px Roboto, sans-serif;
    white-space: nowrap;
}
.status strong { display: flex; align-items: center; margin-left: -5px; }
.status-right { margin-left: auto; display: flex; align-items: center; height: 18px; }
.status-right button { width: 33px; height: 18px; }
.status-right .on { background: #262626; }
.focus { display: flex; align-items: center; gap: 2px; margin-right: 10px; }
.zoom { display: flex; align-items: center; gap: 3px; margin-left: 4px; font-size: 13px; }
.zoom input {
    appearance: none;
    width: 84px;
    height: 10px;
    margin: 0;
    background: linear-gradient(#999, #999) center / 100% 1px no-repeat;
}
.zoom input::-webkit-slider-thumb { appearance: none; width: 4px; height: 10px; background: #bbb; }
.percent { width: 32px; text-align: right; }

/* taskbar */
.taskbar {
    flex: none;
    height: 40px;
    display: flex;
    align-items: center;
    border-top: 1px solid #45342e;
    background: linear-gradient(90deg, #291a1a, #341d15 45%, #2f1c14);
    font-size: 10px;
    line-height: 13px;
}
.side { flex: 1 0 0; display: flex; align-items: center; }
.stocks { padding-left: 17px; gap: 6px; }
.stock-icon { position: relative; width: 20px; height: 32px; }
.stock-icon svg { width: 20px; height: 24px; margin-top: 4px; }
.stock-icon b {
    position: absolute;
    right: -2px;
    top: 1px;
    width: 14px;
    height: 14px;
    border-radius: 50%;
    background: #f58c9d;
    color: #4c1018;
    font-weight: 400;
    line-height: 14px;
    text-align: center;
}
.gain { color: #7fce6b; }
.apps { display: flex; align-items: center; gap: 4px; }
.apps button { position: relative; width: 33px; height: 36px; }
.task-search {
    display: flex;
    align-items: center;
    width: 183px;
    height: 28px;
    padding: 0 8px 0 10px;
    gap: 7px;
    border-radius: 14px;
    background: #4a3530;
    font-size: 11px;
}
.task-search input { flex: 1; min-width: 0; }
.task-search ::placeholder { color: #ddd; }
.plant { width: 32px; height: 24px; }
.running::after {
    content: "";
    position: absolute;
    bottom: 0;
    width: 5px;
    height: 2px;
    border-radius: 1px;
    background: #999;
}
.apps .current { background: #40302b; border-radius: 4px; }
.current::after { width: 13px; background: #5cbdf0; }
.badge {
    position: absolute;
    right: 0;
    top: 1px;
    width: 13px;
    height: 13px;
    border-radius: 50%;
    font: 9px/13px Roboto, sans-serif;
    text-align: center;
}
.photo { background: radial-gradient(circle at 50% 40%, #666 3px, #ddd 5px); }
.blue { background: #1f86bd; }
.red { background: #dd4a50; }
.apps .dot { background: #f00008; width: 10px; height: 10px; top: 4px; right: 3px; }
.tray { justify-content: flex-end; gap: 11px; padding-right: 16px; }
.net { display: flex; gap: 4px; }
.clock { text-align: right; }
```

FILE: script.js
```js
// builds the ruler marks, four per centimetre
function drawRuler(id, from, count, showNumber) {
    const ruler = document.getElementById(id);
    for (let i = 0; i < count; i++) {
        const mark = document.createElement("div");
        const cm = from + i / 4;
        mark.className = "mark";
        if (i % 4 === 0 && showNumber(cm)) {
            mark.classList.add("number");
            mark.innerHTML = `<span>${cm}</span>`;
        } else if (i % 2 === 0) {
            mark.classList.add("half");
        }
        ruler.appendChild(mark);
    }
}

drawRuler("hruler", -3, 84, cm => cm > 0 && cm < 15);
drawRuler("vruler", 16, 46, cm => cm < 25);
```
